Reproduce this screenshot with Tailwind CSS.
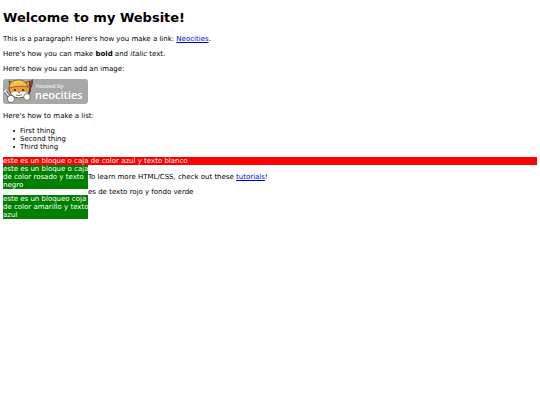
<!DOCTYPE html>
<html lang="es">
<head>
    <meta charset="UTF-8">
    <meta name="viewport" content="width=device-width, initial-scale=1.0">
    <title>The web site of my Neocities</title>
    <script src="https://cdn.jsdelivr.net/npm/@tailwindcss/browser@4"></script>
</head>
<body class="bg-white px-[3px] py-[10px] font-['DejaVu_Sans',sans-serif] text-[7px] leading-[8px] text-black">
    <h1 class="text-[13px] leading-[16px] font-bold">Welcome to my Website!</h1>

    <div class="mt-[9px] space-y-[7px]">
        <p>This is a paragraph! Here's how you make a link: <a href="https://neocities.org" class="text-[#0000ee] underline">Neocities</a>.</p>
        <p>Here's how you can make <strong>bold</strong> and <em>italic</em> text.</p>
        <p>Here's how you can add an image:</p>
    </div>

    <!-- Neocities badge -->
    <svg class="mt-[6px] h-[25px] w-[85px]" viewBox="0 0 85 25" role="img" aria-label="hosted by neocities">
        <rect width="85" height="25" rx="3" fill="#a8a8a8"/>
        <!-- cat head -->
        <path d="M7 13 Q5 9 7 6 L6 2 L10 4 L22 4 L27 2 L26 8 Q29 12 26 15 Q22 19 16 19 Q9 18 7 13 Z" fill="#ee9a45" stroke="#4b3322" stroke-width="0.8"/>
        <path d="M8 14 Q12 12 15 13 Q20 12 25 14 Q23 18 16 18.500 Q10 18 8 14 Z" fill="#fff"/>
        <!-- hard hat -->
        <path d="M6 9 Q6 2 14 1 Q21 0 24 6 L25 8 Q17 6 6 9 Z" fill="#f4bf35" stroke="#6b4a1e" stroke-width="0.7"/>
        <path d="M11 4 Q15 1 20 4" fill="none" stroke="#fbe08a" stroke-width="1"/>
        <circle cx="12" cy="11" r="1" fill="#2b211c"/>
        <circle cx="20" cy="11" r="1" fill="#2b211c"/>
        <path d="M15 13 h2 l-1 1.500 Z" fill="#3a2418"/>
        <path d="M13 16 Q16 17.500 19 15.500" fill="none" stroke="#4b3322" stroke-width="0.7"/>
        <!-- wrench and paw -->
        <path d="M2 12 L7 19" stroke="#4a4a4a" stroke-width="3"/>
        <path d="M1 13 L4 11 M2 12 L7 19" stroke="#ececec" stroke-width="1.5"/>
        <circle cx="8" cy="20" r="3.6" fill="#fff" stroke="#55483f" stroke-width="0.7"/>
        <!-- brush and paw -->
        <path d="M28 7 L25 17" stroke="#55352a" stroke-width="1.5"/>
        <path d="M26.500 7 Q26 3 29.500 0.500 Q30.500 4 28.500 7.500 Z" fill="#a8322c" stroke="#4b2420" stroke-width="0.5"/>
        <circle cx="24" cy="18" r="3.4" fill="#fff" stroke="#55483f" stroke-width="0.7"/>
        <text x="33" y="9" font-family="Open Sans" font-size="6" fill="#fff">hosted by</text>
        <text x="32" y="20" font-family="Open Sans" font-size="11" font-weight="600" fill="#fff">neocities</text>
    </svg>

    <p class="mt-[8px]">Here's how to make a list:</p>
    <ul class="mt-[7px] pl-[10px] *:flex *:items-center *:gap-[5px] *:before:size-[2px] *:before:rounded-full *:before:bg-black">
        <li>First thing</li>
        <li>Second thing</li>
        <li>Third thing</li>
    </ul>

    <div class="mt-[6px] bg-[#ff0000] text-white">este es un bloque o caja de color azul y texto blanco</div>
    <div class="flex items-start">
        <div class="w-[85px] shrink-0 space-y-[6px] whitespace-nowrap text-white">
            <div class="bg-[#008000]">este es un bloque o caja<br>de color rosado y texto<br>negro</div>
            <div class="bg-[#008000]">este es un bloqueo coja<br>de color amarillo y texto<br>azul</div>
        </div>
        <div class="mt-[8px] space-y-[7px]">
            <p>To learn more HTML/CSS, check out these <a href="https://neocities.org/tutorials" class="text-[#0000ee] underline">tutorials</a>!</p>
            <p>es de texto rojo y fondo verde</p>
        </div>
    </div>
</body>
</html>
